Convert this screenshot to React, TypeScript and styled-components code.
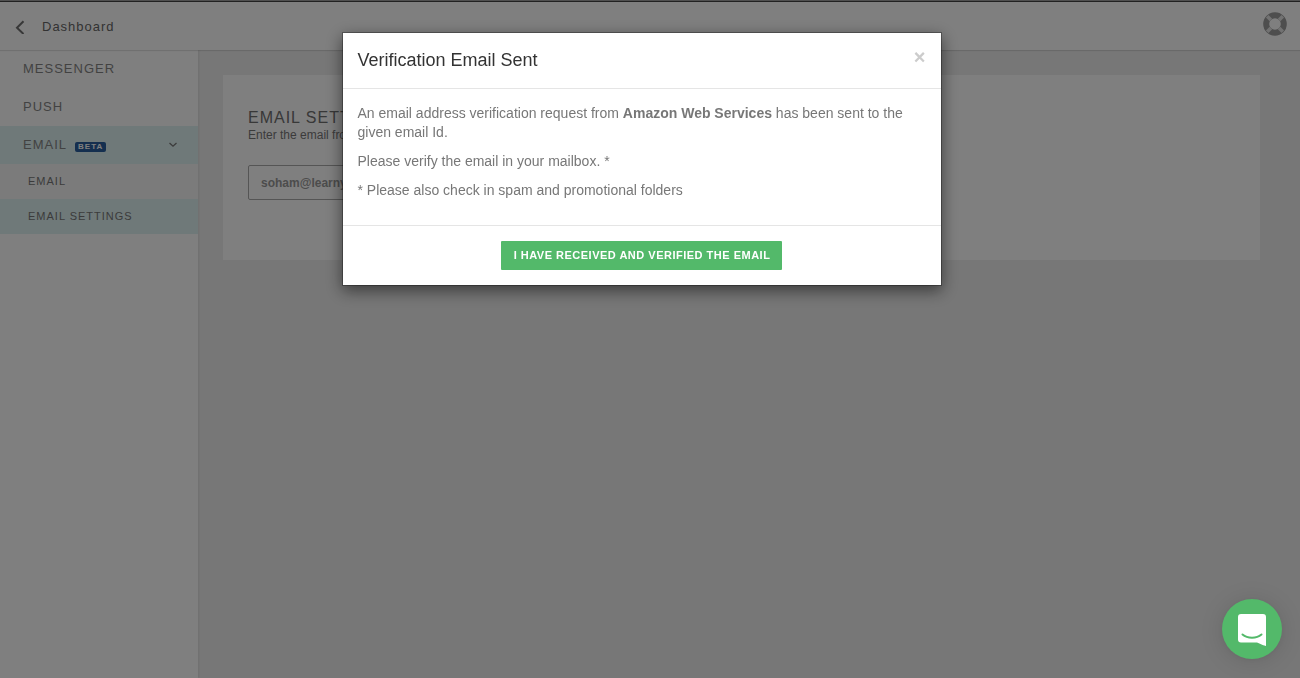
import React from "react";
import styled, { createGlobalStyle } from "styled-components";

const GlobalStyle = createGlobalStyle`
  * { box-sizing: border-box; }
  body {
    margin: 0;
    background: #efefef;
    color: #777;
    font: 14px/19px "Liberation Sans", Arial, sans-serif;
  }
  button, input { font-family: inherit; }
`;

const Page = styled.div`
  display: flex;
  flex-direction: column;
  min-height: 100vh;
`;

const TopBar = styled.header`
  display: flex;
  align-items: center;
  justify-content: space-between;
  height: 50px;
  padding: 1px 13px 0 15px;
  border-top: 1px solid #a0a0a0;
  background: #fff;
  box-shadow: inset 0 1px #444, 0 1px 1px rgba(0, 0, 0, 0.12);
  z-index: 1;
`;

const BackLink = styled.a`
  display: flex;
  align-items: center;
  gap: 16px;
  color: #666;
  font-size: 13px;
  letter-spacing: 1px;
  text-decoration: none;
`;

const HelpButton = styled.button`
  display: flex;
  padding: 0 0 4px;
  border: 0;
  background: none;
`;

const Columns = styled.div`
  display: flex;
  flex: 1;
`;

const Sidebar = styled.nav`
  flex: 0 0 198px;
  background: #fff;
  box-shadow: 1px 0 2px rgba(0, 0, 0, 0.08);
`;

const NavItem = styled.a<{ $active?: boolean }>`
  display: flex;
  align-items: center;
  height: 38px;
  padding: 0 20px 2px 23px;
  background: ${(p) => (p.$active ? "#def2f3" : "transparent")};
  color: #858585;
  font-size: 13px;
  letter-spacing: 1px;
  text-decoration: none;

  svg { margin-left: auto; }
`;

const SubItem = styled(NavItem)`
  height: 35px;
  padding: 0 20px 0 28px;
  background: ${(p) => (p.$active ? "#def2f3" : "#f6f6f6")};
  font-size: 11px;
  color: #777;
`;

const Beta = styled.span`
  margin: 6px 0 0 8px;
  padding: 0 3px;
  border-radius: 2px;
  background: #2a5f9e;
  color: #fff;
  font-size: 8px;
  font-weight: bold;
  line-height: 10px;
`;

const Main = styled.main`
  flex: 1;
  padding: 25px 40px 24px 25px;
`;

const Card = styled.section`
  padding: 33px 25px 60px;
  background: #fff;
`;

const CardTitle = styled.h1`
  margin: 0;
  color: #707070;
  font-size: 16px;
  font-weight: normal;
  letter-spacing: 1px;
  line-height: 20px;
`;

const CardLabel = styled.label`
  display: block;
  margin-bottom: 23px;
  font-size: 12px;
  line-height: 14px;
`;

const EmailInput = styled.input`
  display: block;
  width: 320px;
  height: 35px;
  padding: 0 12px;
  border: 1px solid #aaa;
  border-radius: 2px;
  background: #fff;
  color: #999;
  font-size: 12px;
  font-weight: bold;
`;

const Backdrop = styled.div`
  position: fixed;
  inset: 0;
  z-index: 10;
  display: flex;
  align-items: flex-start;
  justify-content: center;
  padding: 32px 17px 0 0;
  background: rgba(0, 0, 0, 0.5);
`;

const Dialog = styled.div`
  width: 600px;
  max-width: 100%;
  border: 1px solid rgba(0, 0, 0, 0.3);
  background: #fff;
  background-clip: padding-box;
  box-shadow: 0 5px 15px rgba(0, 0, 0, 0.5);
`;

const DialogHeader = styled.div`
  display: flex;
  align-items: flex-start;
  justify-content: space-between;
  padding: 14px 15px 15px;
  border-bottom: 1px solid #e5e5e5;
`;

const DialogTitle = styled.h2`
  margin: 0;
  color: #333;
  font-size: 18px;
  font-weight: normal;
  line-height: 26px;
`;

const CloseButton = styled.button`
  padding: 0;
  border: 0;
  background: none;
  color: #ccc;
  font-size: 20px;
  font-weight: bold;
  line-height: 20px;
`;

const DialogBody = styled.div`
  padding: 15px;

  p { margin: 0 0 10px; }
`;

const DialogFooter = styled.div`
  display: flex;
  justify-content: center;
  padding: 15px;
  border-top: 1px solid #e5e5e5;
`;

const ConfirmButton = styled.button`
  height: 29px;
  padding: 0 12px 2px 13px;
  border: 0;
  border-radius: 1px;
  background: #53b96a;
  color: #fff;
  font-size: 11px;
  font-weight: bold;
  letter-spacing: 0.5px;
`;

const ChatButton = styled.button`
  position: fixed;
  right: 18px;
  bottom: 19px;
  z-index: 20;
  display: flex;
  align-items: center;
  justify-content: center;
  width: 60px;
  height: 60px;
  padding: 2px 0 0;
  border: 0;
  border-radius: 50%;
  background: #53b96a;
  box-shadow: 0 1px 6px rgba(0, 0, 0, 0.06), 0 2px 24px rgba(0, 0, 0, 0.12);
`;

const BackIcon = () => (
  <svg width="11" height="16" viewBox="0 0 11 16" fill="none" stroke="#707070" strokeWidth="2" aria-hidden="true">
    <path d="M8.5 3.3 2 9.8l6.500 6.200" />
  </svg>
);

const ChevronIcon = () => (
  <svg width="10" height="8" viewBox="0 0 10 8" fill="none" stroke="#777" strokeWidth="1.3" aria-hidden="true">
    <path d="m1.500 3 3.500 3.200L8.500 3" />
  </svg>
);

const LifebuoyIcon = () => (
  <svg width="24" height="24" viewBox="0 0 24 24" fill="none" aria-hidden="true">
    <circle cx="12" cy="12" r="8.8" stroke="#9c9c9c" strokeWidth="6" />
    <path
      stroke="#e4e4e4"
      strokeWidth="3.6"
      d="M4.200 4.200 7.900 7.900M19.800 4.200 16.100 7.900M19.800 19.800 16.100 16.100M4.200 19.800 7.900 16.100"
    />
  </svg>
);

const ChatIcon = () => (
  <svg width="28" height="32" viewBox="0 0 28 32" aria-hidden="true">
    <path fill="#fff" d="M3 0h22a3 3 0 0 1 3 3v29s-4-1-9-3.500H3a3 3 0 0 1-3-3V3a3 3 0 0 1 3-3z" />
    <path fill="none" stroke="#53b96a" strokeWidth="2" strokeLinecap="round" d="M4.500 20.500c5 4.200 14 4.200 19 0" />
  </svg>
);

export default function App() {
  return (
    <>
      <GlobalStyle />
      <Page>
        <TopBar>
          <BackLink href="#dashboard">
            <BackIcon />
            Dashboard
          </BackLink>
          <HelpButton type="button" aria-label="Help">
            <LifebuoyIcon />
          </HelpButton>
        </TopBar>
        <Columns>
          <Sidebar>
            <NavItem href="#messenger">MESSENGER</NavItem>
            <NavItem href="#push">PUSH</NavItem>
            <NavItem href="#email" $active>
              EMAIL
              <Beta>BETA</Beta>
              <ChevronIcon />
            </NavItem>
            <SubItem href="#email-list">EMAIL</SubItem>
            <SubItem href="#email-settings" $active>EMAIL SETTINGS</SubItem>
          </Sidebar>
          <Main>
            <Card>
              <CardTitle>EMAIL SETTINGS</CardTitle>
              <CardLabel htmlFor="sender">Enter the email from</CardLabel>
              <EmailInput id="sender" type="email" defaultValue="soham@learnyst.com" />
            </Card>
          </Main>
        </Columns>
      </Page>
      <Backdrop>
        <Dialog role="dialog" aria-modal="true" aria-labelledby="dialog-title">
          <DialogHeader>
            <DialogTitle id="dialog-title">Verification Email Sent</DialogTitle>
            <CloseButton type="button" aria-label="Close">×</CloseButton>
          </DialogHeader>
          <DialogBody>
            <p>
              An email address verification request from <b>Amazon Web Services</b> has been sent to the given email Id.
            </p>
            <p>Please verify the email in your mailbox. *</p>
            <p>* Please also check in spam and promotional folders</p>
          </DialogBody>
          <DialogFooter>
            <ConfirmButton type="button">I HAVE RECEIVED AND VERIFIED THE EMAIL</ConfirmButton>
          </DialogFooter>
        </Dialog>
      </Backdrop>
      <ChatButton type="button" aria-label="Open chat">
        <ChatIcon />
      </ChatButton>
    </>
  );
}
